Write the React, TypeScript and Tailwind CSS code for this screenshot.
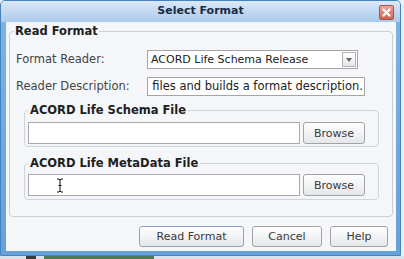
import React from "react";

const font = { fontFamily: '"DejaVu Sans", "Liberation Sans", sans-serif' };

function Button({ label, className = "" }: { label: string; className?: string }) {
  return (
    <button
      className={`flex h-[21px] items-center justify-center rounded-[3px] border bg-gradient-to-b from-[#ffffff] to-[#e4e7ea] text-[11px] leading-none text-[#3a3a3a] ${className}`}
    >
      {label}
    </button>
  );
}

function FileGroup({ title, cursor = false, className = "" }: { title: string; cursor?: boolean; className?: string }) {
  return (
    <fieldset
      className={`ml-[8px] mr-[7px] rounded-[4px] border border-[#d0d4d9] pl-[3px] pr-[13px] ${className}`}
    >
      <legend className="px-[2px] text-[11.5px] font-bold leading-[14px] text-[#1e1e1e]">{title}</legend>
      <div className="flex gap-[3px]">
        <div className="flex h-[22px] flex-1 items-center border border-[#a9a9a9] bg-white">
          {cursor && (
            <svg width="8" height="15" viewBox="0 0 8 15" className="ml-[27px]">
              <path d="M1 1h2l1 1 1-1h2M4 2v11M1 14h2l1-1 1 1h2M2.5 7.5h3" stroke="#fff" strokeWidth="2.2" fill="none" />
              <path d="M1 1h2l1 1 1-1h2M4 2v11M1 14h2l1-1 1 1h2M2.5 7.5h3" stroke="#111" strokeWidth="1" fill="none" />
            </svg>
          )}
        </div>
        <Button label="Browse" className="h-[22px] w-[62px] border-[#a3a3a3]" />
      </div>
    </fieldset>
  );
}

export default function App() {
  return (
    <div style={font} className="flex h-[259px] w-[404px] flex-col overflow-hidden bg-[#edf1f5]">
      <div className="flex h-[256px] w-[401px] flex-col overflow-hidden rounded-t-[5px] border border-[#4681c0] bg-gradient-to-b from-[#7fb3e5] to-[#65a1da]">
        {/* title bar */}
        <div className="relative flex h-[21px] items-center justify-center bg-gradient-to-b from-[#dbe9f8] via-[#c3d9f1] to-[#abcaeb]">
          <span className="text-[11px] font-bold text-[#1b2a45]">Select Format</span>
          <div className="absolute right-[6px] top-[4px] flex h-[15px] w-[15px] items-center justify-center rounded-[2px] border border-[#a5544a] bg-gradient-to-b from-[#eca699] to-[#cd6352]">
            <svg width="9" height="9" viewBox="0 0 9 9">
              <path d="M1.5 1.5l6 6M7.5 1.5l-6 6" stroke="#fff" strokeWidth="2.2" strokeLinecap="round" />
            </svg>
          </div>
        </div>

        {/* content */}
        <div className="mb-[4px] ml-[5px] mr-[4px] flex flex-1 flex-col bg-[#f4f6f9] px-[3px] pt-[2px]">
          <fieldset className="rounded-[4px] border border-[#cbd0d6] pb-[16px] pl-[6px] pr-[6px] pt-[12px]">
            <legend className="-ml-[2px] px-[1px] text-[11.5px] font-bold leading-[14px] text-[#1e1e1e]">Read Format</legend>

            <div className="flex items-center">
              <span className="w-[131px] text-[11.5px] text-[#444]">Format Reader:</span>
              <div className="flex h-[19px] w-[211px] items-center justify-between border border-[#a5a5a5] bg-white pl-[3px] pr-[1px]">
                <span className="text-[11px] leading-none text-[#222]">ACORD Life Schema Release</span>
                <div className="flex h-[15px] w-[14px] items-center justify-center border border-[#b3b3b3] bg-gradient-to-b from-[#ffffff] to-[#e3e6e9]">
                  <svg width="6" height="4" viewBox="0 0 6 4">
                    <path d="M0 0h6L3 4z" fill="#666" />
                  </svg>
                </div>
              </div>
            </div>

            <div className="mt-[8px] flex items-center">
              <span className="w-[131px] text-[11.5px] text-[#444]">Reader Description:</span>
              <div className="relative h-[19px] w-[218px] overflow-hidden border border-[#a5a5a5] bg-white">
                <span className="absolute right-[1px] top-[2px] whitespace-nowrap text-[11.5px] leading-[13px] text-[#222]">
                  Reads the ACORD Life Schema and MetaData files and builds a format description.
                </span>
              </div>
            </div>

            <FileGroup title="ACORD Life Schema File" className="mt-[7px] pb-[2px] pt-[5px]" />
            <FileGroup title="ACORD Life MetaData File" cursor className="mt-[9px] pb-[3px] pt-[4px]" />
          </fieldset>

          <div className="mt-[9px] flex justify-end gap-[8px] pr-[5px]">
            <Button label="Read Format" className="w-[105px] border-[#8aa5c4]" />
            <Button label="Cancel" className="w-[70px] border-[#a3a3a3]" />
            <Button label="Help" className="w-[58px] border-[#a3a3a3]" />
          </div>
        </div>
      </div>
      <div className="flex h-[3px] w-[404px] bg-[#d9e1ea]">
        <div className="ml-[26px] h-[3px] w-[10px] bg-[#3a3a3a]" />
        <div className="ml-[8px] h-[3px] w-[110px] bg-[#4d7a55]" />
      </div>
    </div>
  );
}
